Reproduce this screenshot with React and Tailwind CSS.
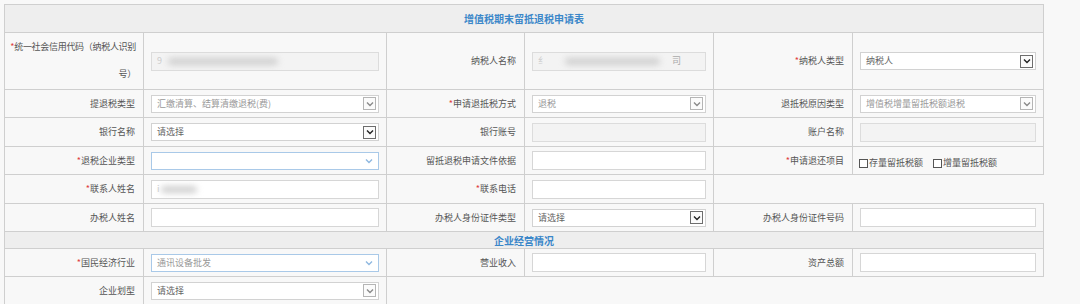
import React from "react";

const FONT = { fontFamily: '"Noto Sans CJK SC", "Noto Sans", sans-serif' };

function Chevron({ color }) {
  return (
    <svg width="10" height="10" viewBox="0 0 10 10">
      <polyline points="2,3.5 5,6.5 8,3.5" fill="none" stroke={color} strokeWidth="1.4" />
    </svg>
  );
}

function Label({ text, req }) {
  return (
    <td className="border border-[#cfcfcf] pr-[8px] text-right align-middle text-[9px] text-[#555]">
      {req && <span className="text-[#e04040]">*</span>}
      {text}
    </td>
  );
}

function Cell({ children }) {
  return <td className="border border-[#cfcfcf] px-[7px] align-middle">{children}</td>;
}

function TextBox({ disabled, children }) {
  return (
    <div
      className={
        "flex h-[19px] w-full items-center overflow-hidden border px-[5px] text-[9px] text-[#999] " +
        (disabled ? "border-[#dcdcdc] bg-[#f3f3f3]" : "border-[#d6d6d6] bg-white")
      }
    >
      {children}
    </div>
  );
}

function Select({ value, tone = "dark", valueColor = "#999" }) {
  const blue = tone === "blue";
  const boxBorder = tone === "dark" ? "border-[#6d6d6d]" : "border-[#b5b5b5]";
  const chev = tone === "dark" ? "#222" : blue ? "#8fb8e0" : "#8a8a8a";
  return (
    <div
      className={
        "flex h-[18px] w-full items-center justify-between border bg-white pl-[5px] pr-[2px] text-[9px] " +
        (blue ? "border-[#a9c9e8]" : "border-[#d2d2d2]")
      }
    >
      <span style={{ color: valueColor }}>{value}</span>
      {blue ? (
        <span className="flex h-[14px] w-[14px] items-center justify-center">
          <Chevron color={chev} />
        </span>
      ) : (
        <span className={"flex h-[13px] w-[13px] items-center justify-center border bg-[#fbfbfb] " + boxBorder}>
          <Chevron color={chev} />
        </span>
      )}
    </div>
  );
}

function Blur({ w, ml = 0 }) {
  return (
    <span
      className="inline-block h-[7px] rounded-full bg-[#cfcfcf] blur-[3px]"
      style={{ width: w, marginLeft: ml }}
    />
  );
}

function Check({ text }) {
  return (
    <span className="mr-[10px] inline-flex items-center text-[9px] text-[#555]">
      <span className="mr-[1px] inline-block h-[9px] w-[9px] border border-[#555] bg-white" />
      {text}
    </span>
  );
}

export default function App() {
  return (
    <div className="min-h-[304px] w-[1080px] bg-[#f8f8f8] pl-[4px] pt-[4px]" style={FONT}>
      <table className="w-[1039px] table-fixed border-collapse">
        <colgroup>
          <col className="w-[139px]" />
          <col className="w-[243px]" />
          <col className="w-[138px]" />
          <col className="w-[189px]" />
          <col className="w-[139px]" />
          <col className="w-[191px]" />
        </colgroup>
        <tbody>
          <tr className="h-[28px]">
            <td colSpan={6} className="border border-[#cfcfcf] bg-[#eeeeee] text-center text-[10px] font-bold text-[#3b87c9]">
              增值税期末留抵退税申请表
            </td>
          </tr>
          <tr className="h-[57px]">
            <td className="whitespace-nowrap border border-[#cfcfcf] pr-[7px] text-right align-top text-[9px] leading-[27px] tracking-[-0.3px] text-[#555]">
              <span className="text-[#e04040]">*</span>统一社会信用代码（纳税人识别
              <br />
              号）
            </td>
            <Cell>
              <TextBox disabled>
                <span className="text-[#ccc]">9</span>
                <Blur w={110} ml={6} />
              </TextBox>
            </Cell>
            <Label text="纳税人名称" />
            <Cell>
              <TextBox disabled>
                <span className="text-[#ccc]">纟</span>
                <Blur w={95} ml={18} />
                <span className="ml-[12px] text-[#aaa]">司</span>
              </TextBox>
            </Cell>
            <Label req text="纳税人类型" />
            <Cell>
              <Select value="纳税人" valueColor="#666" />
            </Cell>
          </tr>
          <tr className="h-[28px]">
            <Label text="提退税类型" />
            <Cell>
              <Select value="汇缴清算、结算清缴退税(费)" tone="light" />
            </Cell>
            <Label req text="申请退抵税方式" />
            <Cell>
              <Select value="退税" tone="light" />
            </Cell>
            <Label text="退抵税原因类型" />
            <Cell>
              <Select value="增值税增量留抵税额退税" tone="light" />
            </Cell>
          </tr>
          <tr className="h-[29px]">
            <Label text="银行名称" />
            <Cell>
              <Select value="请选择" valueColor="#666" />
            </Cell>
            <Label text="银行账号" />
            <Cell>
              <TextBox disabled />
            </Cell>
            <Label text="账户名称" />
            <Cell>
              <TextBox disabled />
            </Cell>
          </tr>
          <tr className="h-[28px]">
            <Label req text="退税企业类型" />
            <Cell>
              <Select value="" tone="blue" />
            </Cell>
            <Label text="留抵退税申请文件依据" />
            <Cell>
              <TextBox />
            </Cell>
            <Label req text="申请退还项目" />
            <td className="border border-[#cfcfcf] px-[6px] align-middle">
              <Check text="存量留抵税额" />
              <Check text="增量留抵税额" />
            </td>
          </tr>
          <tr className="h-[29px]">
            <Label req text="联系人姓名" />
            <Cell>
              <TextBox>
                <span className="text-[#ccc]">i</span>
                <Blur w={36} ml={2} />
              </TextBox>
            </Cell>
            <Label req text="联系电话" />
            <Cell>
              <TextBox />
            </Cell>
            <td colSpan={2} className="border-0" />
          </tr>
          <tr className="h-[28px]">
            <Label text="办税人姓名" />
            <Cell>
              <TextBox />
            </Cell>
            <Label text="办税人身份证件类型" />
            <Cell>
              <Select value="请选择" valueColor="#666" />
            </Cell>
            <Label text="办税人身份证件号码" />
            <Cell>
              <TextBox />
            </Cell>
          </tr>
          <tr className="h-[17px]">
            <td colSpan={6} className="border border-[#cfcfcf] bg-[#eeeeee] text-center text-[10px] leading-[15px] font-bold text-[#3b87c9]">
              企业经营情况
            </td>
          </tr>
          <tr className="h-[28px]">
            <Label req text="国民经济行业" />
            <Cell>
              <Select value="通讯设备批发" tone="blue" />
            </Cell>
            <Label text="营业收入" />
            <Cell>
              <TextBox />
            </Cell>
            <Label text="资产总额" />
            <Cell>
              <TextBox />
            </Cell>
          </tr>
          <tr className="h-[28px]">
            <Label text="企业划型" />
            <Cell>
              <Select value="请选择" tone="light" valueColor="#666" />
            </Cell>
            <td colSpan={4} className="border-0" />
          </tr>
        </tbody>
      </table>
    </div>
  );
}
